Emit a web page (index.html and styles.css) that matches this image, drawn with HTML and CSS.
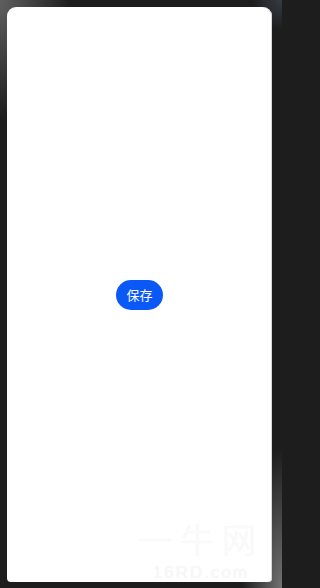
FILE: index.html
```html
<!DOCTYPE html>
<html lang="zh-CN">
<head>
<meta charset="utf-8">
<title>保存</title>
<link rel="stylesheet" href="styles.css">
</head>
<body>
<div class="frame">
  <main class="screen">
    <button class="save-btn" type="button">保存</button>
  </main>
  <div class="watermark" aria-hidden="true">
    <span class="wm-big">一牛网</span>
    <span class="wm-small">16RD.com</span>
  </div>
</div>
</body>
</html>
```
FILE: styles.css
```css
html, body {
  margin: 0;
  padding: 0;
  background: #1d1d1d;
}

.frame {
  position: relative;
  width: 282px;
  height: 588px;
  overflow: hidden;
  padding: 7px 10px 6px 7px;
  box-sizing: border-box;
  background-color: #1d1d1d;
  background-image:
    radial-gradient(ellipse 70px 120px at 0 0, rgba(150,150,150,0.55), rgba(150,150,150,0) 100%),
    radial-gradient(ellipse 40px 140px at 100% 100%, rgba(170,170,170,0.6), rgba(170,170,170,0) 100%),
    radial-gradient(ellipse 30px 30px at 100% 0, rgba(70,80,95,0.6), rgba(70,80,95,0) 100%);
  font-family: "Noto Sans CJK SC", "Noto Sans", sans-serif;
}

.screen {
  height: 100%;
  background: #ffffff;
  border-radius: 9px 9px 4px 4px;
  box-shadow: inset -1px 0 0 #d6d6d6;
  display: flex;
  align-items: center;
  justify-content: center;
}

.save-btn {
  width: 47px;
  height: 30px;
  border: none;
  border-radius: 15px;
  background: #0a59f7;
  color: #ffffff;
  font-family: "Noto Sans CJK SC", "Noto Sans", sans-serif;
  font-size: 13px;
  line-height: 30px;
  padding: 0;
  margin-top: 1px;
}

.watermark {
  position: absolute;
  left: 126px;
  top: 522px;
  width: 150px;
  display: flex;
  flex-direction: column;
  align-items: center;
  gap: 8px;
  pointer-events: none;
  color: rgba(255,255,255,0.85);
  text-shadow: 0 0 1px rgba(0,0,0,0.1);
}

.wm-big {
  font-family: "Noto Sans CJK SC", sans-serif;
  font-size: 34px;
  line-height: 34px;
  font-weight: 300;
  letter-spacing: 8px;
}

.wm-small {
  font-family: "Liberation Sans", sans-serif;
  font-size: 17px;
  line-height: 17px;
  letter-spacing: 2px;
  color: rgba(255,255,255,0.7);
}
```
